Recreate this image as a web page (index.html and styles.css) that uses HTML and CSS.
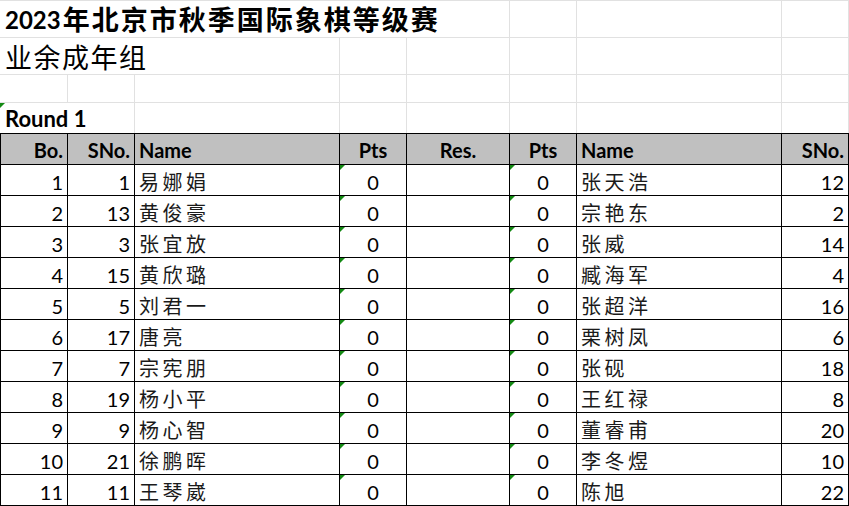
FILE: index.html
```html
<!DOCTYPE html>
<html lang="zh">
<head>
<meta charset="utf-8">
<title>Round 1</title>
<link rel="stylesheet" href="styles.css">
</head>
<body>
<div class="sheet">
  <!-- row 1 -->
  <div class="c r1 span5 title"><span class="yr">2023</span>年北京市秋季国际象棋等级赛</div>
  <div class="c r1"></div>
  <div class="c r1"></div>
  <div class="c r1"></div>
  <!-- row 2 -->
  <div class="c span3 sub">业余成年组</div>
  <div class="c"></div><div class="c"></div><div class="c"></div><div class="c"></div><div class="c"></div>
  <!-- row 3 -->
  <div class="c"></div><div class="c"></div><div class="c"></div><div class="c"></div>
  <div class="c"></div><div class="c"></div><div class="c"></div><div class="c"></div>
  <!-- row 4 -->
  <div class="c r4 span2 round mark">Round 1</div>
  <div class="c r4"></div><div class="c r4"></div><div class="c r4"></div>
  <div class="c r4"></div><div class="c r4"></div><div class="c r4"></div>
  <!-- header -->
  <div class="t h first right">Bo.</div>
  <div class="t h right">SNo.</div>
  <div class="t h">Name</div>
  <div class="t h center">Pts</div>
  <div class="t h center">Res.</div>
  <div class="t h center">Pts</div>
  <div class="t h">Name</div>
  <div class="t h right">SNo.</div>
</div>
<div class="sheet rows" id="rows"></div>
<script src="app.js"></script>
</body>
</html>
```
FILE: app.js
```js
const data = [
  [1, 1, "易娜娟", "张天浩", 12],
  [2, 13, "黄俊豪", "宗艳东", 2],
  [3, 3, "张宜放", "张威", 14],
  [4, 15, "黄欣璐", "臧海军", 4],
  [5, 5, "刘君一", "张超洋", 16],
  [6, 17, "唐亮", "栗树凤", 6],
  [7, 7, "宗宪朋", "张砚", 18],
  [8, 19, "杨小平", "王红禄", 8],
  [9, 9, "杨心智", "董睿甫", 20],
  [10, 21, "徐鹏晖", "李冬煜", 10],
  [11, 11, "王琴崴", "陈旭", 22]
];
const rows = document.getElementById("rows");
let html = "";
for (const r of data) {
  html +=
    '<div class="t d first right">' + r[0] + '</div>' +
    '<div class="t d right">' + r[1] + '</div>' +
    '<div class="t d"><span class="nm">' + r[2] + '</span></div>' +
    '<div class="t d center mark">0</div>' +
    '<div class="t d center"></div>' +
    '<div class="t d center mark">0</div>' +
    '<div class="t d"><span class="nm">' + r[3] + '</span></div>' +
    '<div class="t d right">' + r[4] + '</div>';
}
rows.innerHTML = html;
```
FILE: styles.css
```css
html, body {
  margin: 0;
  padding: 0;
  background: #ffffff;
  overflow: hidden;
}
body {
  width: 849px;
  height: 506px;
  font-family: Lato, "Noto Sans CJK SC", sans-serif;
  color: #000;
}
.sheet {
  display: grid;
  grid-template-columns: 68px 67px 205px 67px 103px 67px 205px 67px;
  grid-template-rows: 38px 37px 28px 30px 32px;
}
.sheet.rows {
  grid-template-rows: repeat(11, 31px);
}
.c {
  box-sizing: border-box;
  border-right: 1px solid #e1e1e1;
  border-bottom: 1px solid #e1e1e1;
  display: flex;
  align-items: flex-end;
  padding: 0 4px;
  position: relative;
  white-space: nowrap;
}
.r1 { border-top: 1px solid #e1e1e1; }
.r4 { border-bottom: none; }
.span5 { grid-column: span 5; }
.span3 { grid-column: span 3; }
.span2 { grid-column: span 2; }
.title {
  font-size: 27px;
  font-weight: 700;
  letter-spacing: 2px;
  line-height: 32px;
  padding-left: 5px;
  padding-bottom: 1px;
}
.title .yr { font-size: 24px; letter-spacing: 0; margin-right: 2px; }
.sub {
  font-family: "Noto Sans CJK SC", sans-serif;
  font-size: 27px;
  letter-spacing: 1.5px;
  line-height: 32px;
  padding-left: 5px;
  padding-bottom: 1px;
}
.round {
  font-size: 22px;
  font-weight: 700;
  line-height: 26px;
  padding-left: 5px;
  padding-bottom: 1px;
}
.t {
  box-sizing: border-box;
  border-right: 1px solid #000;
  border-bottom: 1px solid #000;
  display: flex;
  align-items: flex-end;
  padding: 0 4px 1px 4px;
  position: relative;
  font-size: 20px;
  line-height: 24px;
  white-space: nowrap;
  background: #fff;
}
.first { border-left: 1px solid #000; }
.h {
  background: #c0c0c0;
  border-top: 1px solid #000;
  font-weight: 700;
  padding-bottom: 2px;
}
.right { justify-content: flex-end; }
.center { justify-content: center; }
.nm {
  font-family: "Noto Sans CJK SC", sans-serif;
  font-size: 20px;
  letter-spacing: 3.5px;
  line-height: 24px;
  color: #1a1a1a;
}
.mark::before {
  content: "";
  position: absolute;
  top: 0;
  left: 0;
  border-top: 5px solid #138a13;
  border-right: 5px solid transparent;
}
```
